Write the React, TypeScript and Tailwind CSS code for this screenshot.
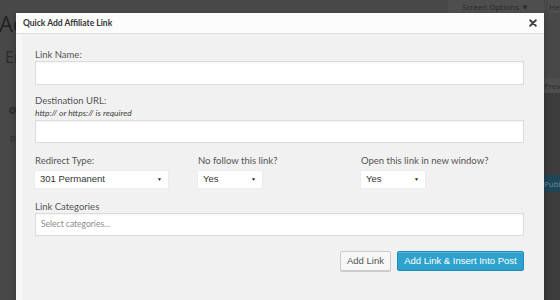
import React from "react";

const fieldLabel = "block text-[9.5px] leading-[13px] text-[#555]";
const selectBox =
  "flex items-center justify-between h-[17px] bg-white pl-[5px] pr-[6px] text-[9.5px] text-[#333] shadow-[0_0_0_1px_#ececec]";

const Caret = () => <span className="text-[5px] leading-none text-[#222]">▼</span>;

const Select = ({ value, width }: { value: string; width: string }) => (
  <div className={`${selectBox} ${width}`} style={{ fontFamily: '"Liberation Sans", Arial, sans-serif' }}>
    <span>{value}</span>
    <Caret />
  </div>
);

const TextInput = ({ placeholder, h = "h-[24px]" }: { placeholder?: string; h?: string }) => (
  <div className={`${h} bg-white border border-[#dcdcdc] shadow-[inset_0_1px_2px_rgba(0,0,0,0.05)] flex items-center px-[5px]`}>
    {placeholder && <span className="text-[8.5px] text-[#8a8a8a]">{placeholder}</span>}
  </div>
);

// the dimmed admin page behind the modal
const BackgroundPage = () => (
  <div className="flex w-full h-full" style={{ fontFamily: '"Open Sans", sans-serif' }}>
    <div className="flex-1 flex flex-col">
      <div className="mt-[10px] text-[22px] leading-[26px] text-[#222] -ml-[1px]">Add New Link</div>
      <div className="mt-[10px] pl-[5px] text-[16px] leading-[22px] text-[#2b2b2b]">Enter title</div>
      <div className="mt-[35px] pl-[8px] text-[10px] leading-[14px] text-[#222]">⚙</div>
      <div className="mt-[17px] pl-[10px] text-[9px] leading-[12px] text-[#2c2c2c]">Permalink</div>
    </div>
    <div className="w-[120px] flex flex-col items-end">
      <div className="flex gap-[4px]">
        <div className="w-[96px] h-[13px] bg-[#4e4e4e] text-[8px] leading-[14px] text-[#2a2a2a] pl-[14px]">Screen Options ▼</div>
        <div className="w-[12px] h-[13px] bg-[#4e4e4e] text-[8px] leading-[14px] text-[#2a2a2a] pl-[1px] overflow-hidden">Help</div>
      </div>
      <div className="mt-[65px] w-[16px] h-[15px] bg-[#4e4e4e] text-[8px] leading-[15px] text-[#2a2a2a] overflow-hidden whitespace-nowrap">Preview</div>
      <div className="w-[16px] h-[82px] bg-[#3c3c3c]" />
      <div className="w-[16px] h-[17px] bg-[#1f4658] text-[8px] leading-[17px] text-[#6f8b99] overflow-hidden whitespace-nowrap">Publish</div>
      <div className="w-[16px] flex-1 bg-[#3c3c3c]" />
    </div>
  </div>
);

export default function App() {
  return (
    <div className="relative w-[560px] h-[300px] bg-[#484848] overflow-hidden">
      <BackgroundPage />
      <div
        className="absolute left-[16px] top-[13px] w-[528px] h-[300px] bg-[#f1f1f1] shadow-[0_3px_6px_rgba(0,0,0,0.3)] flex flex-col"
        style={{ fontFamily: 'Lato, "Open Sans", sans-serif' }}
      >
        <div className="h-[21px] bg-[#fcfcfc] border-b border-[#dddddd] flex items-center justify-between pl-[7px] pr-[7px] shrink-0">
          <span className="text-[8.5px] font-bold text-[#333]">Quick Add Affiliate Link</span>
          <svg width="8" height="8" viewBox="0 0 10 10" className="text-[#444]">
            <path d="M1.5 1.5 L8.5 8.5 M8.5 1.5 L1.5 8.5" stroke="currentColor" strokeWidth="2.4" strokeLinecap="round" />
          </svg>
        </div>
        <div className="flex-1 border-l-[6px] border-[#f7f7f7] pl-[13px] pr-[20px] pt-[14px]">
          <label className={fieldLabel}>Link Name:</label>
          <TextInput />

          <label className={`${fieldLabel} mt-[9px]`}>Destination URL:</label>
          <div className="text-[8.5px] leading-[10px] italic text-[#444] mt-[1px]">http:// or https:// is required</div>
          <div className="mt-[2px]">
            <TextInput h="h-[23px]" />
          </div>

          <div className="grid grid-cols-3 mt-[11px]">
            <div>
              <label className={fieldLabel}>Redirect Type:</label>
              <div className="mt-[4px]">
                <Select value="301 Permanent" width="w-[133px]" />
              </div>
            </div>
            <div>
              <label className={fieldLabel}>No follow this link?</label>
              <div className="mt-[4px]">
                <Select value="Yes" width="w-[64px]" />
              </div>
            </div>
            <div>
              <label className={fieldLabel}>Open this link in new window?</label>
              <div className="mt-[4px]">
                <Select value="Yes" width="w-[64px]" />
              </div>
            </div>
          </div>

          <label className={`${fieldLabel} mt-[12px]`}>Link Categories</label>
          <TextInput placeholder="Select categories..." h="h-[23px]" />

          <div
            className="flex justify-end gap-[6px] mt-[15px] text-[9.5px]"
            style={{ fontFamily: '"Liberation Sans", Arial, sans-serif' }}
          >
            <button className="h-[20px] w-[51px] bg-[#f7f7f7] border border-[#cccccc] rounded-[2px] text-[#555] shadow-[0_1px_0_#ccc]">
              Add Link
            </button>
            <button className="h-[20px] w-[127px] bg-[#2ea2cc] border border-[#1e8cbe] rounded-[2px] text-white shadow-[inset_0_1px_0_rgba(120,200,230,0.5)]">
              Add Link &amp; Insert Into Post
            </button>
          </div>
        </div>
      </div>
    </div>
  );
}
